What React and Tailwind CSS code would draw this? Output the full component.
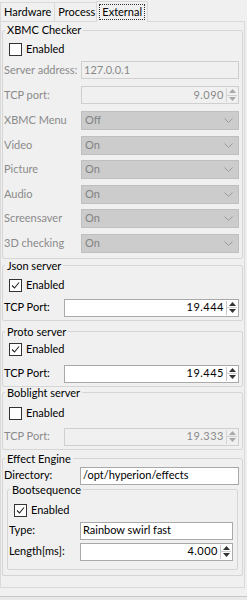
import React from 'react';

const font = { fontFamily: 'Lato, "Liberation Sans", sans-serif' };

function GroupBox({ title, className = '', children }) {
  return (
    <fieldset className={`border border-[#d5d5d5] rounded-[2px] px-[1px] m-0 ${className}`}>
      <legend className="px-[2px] ml-[1px] text-[11px] leading-[12px] text-black">{title}</legend>
      {children}
    </fieldset>
  );
}

function CheckBox({ checked, className = '' }) {
  return (
    <div className={`flex items-center h-[14px] gap-[4px] pl-[5px] ${className}`}>
      <span className="w-[13px] h-[13px] border border-[#333] bg-white flex items-center justify-center">
        {checked && (
          <svg width="11" height="11" viewBox="0 0 11 11">
            <path d="M2 5.5 L4.5 8 L9 2.5" fill="none" stroke="#222" strokeWidth="1.1" />
          </svg>
        )}
      </span>
      <span className="text-[11px] text-black">Enabled</span>
    </div>
  );
}

function Arrows({ disabled }) {
  const c = disabled ? '#a8a8a8' : '#333';
  return (
    <div className={`w-[11px] h-full flex flex-col border-l ${disabled ? 'border-[#d5d5d5]' : 'border-[#c8c8c8]'}`}>
      <div className="flex-1 flex items-center justify-center border-b border-[#d0d0d0]">
        <svg width="7" height="4" viewBox="0 0 7 4"><path d="M0 4 L3.5 0 L7 4Z" fill={c} /></svg>
      </div>
      <div className="flex-1 flex items-center justify-center">
        <svg width="7" height="4" viewBox="0 0 7 4"><path d="M0 0 L3.5 4 L7 0Z" fill={c} /></svg>
      </div>
    </div>
  );
}

function LineEdit({ value, disabled, className = '' }) {
  return (
    <div
      className={`h-[18px] border flex items-center px-[2px] text-[11px] ${
        disabled ? 'bg-[#f0f0f0] border-[#cfcfcf] text-[#8a8a8a]' : 'bg-white border-[#a9a9a9] text-black'
      } ${className}`}
    >
      {value}
    </div>
  );
}

function SpinBox({ value, disabled, className = '' }) {
  return (
    <div
      className={`h-[18px] border flex items-stretch text-[11px] ${
        disabled ? 'bg-[#f0f0f0] border-[#cfcfcf] text-[#8a8a8a]' : 'bg-white border-[#a9a9a9] text-black'
      } ${className}`}
    >
      <div className="flex-1 flex items-center justify-end pr-[2px] tracking-[0.5px]">{value}</div>
      <div className="py-[1px] pr-[1px]">
        <Arrows disabled={disabled} />
      </div>
    </div>
  );
}

function Combo({ value }) {
  return (
    <div className="h-[19px] flex-1 bg-[#cccccc] border border-[#bfbfbf] flex items-center justify-between px-[3px] text-[11px] text-[#838383]">
      <span>{value}</span>
      <svg width="9" height="5" viewBox="0 0 9 5" className="mr-[2px]">
        <path d="M0.5 0.5 L4.5 4.5 L8.5 0.5" fill="none" stroke="#9a9a9a" />
      </svg>
    </div>
  );
}

function Row({ label, disabled, labelWidth = 'w-[77px]', className = '', children }) {
  return (
    <div className={`flex items-center ${className}`}>
      <span className={`${labelWidth} shrink-0 text-[11px] whitespace-nowrap ${disabled ? 'text-[#8a8a8a]' : 'text-black'}`}>{label}</span>
      {children}
    </div>
  );
}

export default function App() {
  const combos = [
    ['XBMC Menu', 'Off'],
    ['Video', 'On'],
    ['Picture', 'On'],
    ['Audio', 'On'],
    ['Screensaver', 'On'],
    ['3D checking', 'On'],
  ];

  return (
    <div className="w-[247px] h-[600px] bg-[#f0f0f0] overflow-hidden" style={font}>
      {/* tab bar */}
      <div className="flex items-end h-[21px] text-[11px] text-black">
        <div className="h-[19px] px-[3px] flex items-center border-t border-l border-[#d9d9d9]">Hardware</div>
        <div className="h-[19px] pl-[3px] pr-[1px] flex items-center border-t border-l border-[#d9d9d9]">Process</div>
        <div className="h-[21px] px-[2px] flex items-center border-t border-x border-[#d9d9d9] bg-[#f0f0f0] -mb-px relative">
          <span className="border border-dotted border-[#333] px-[2px] leading-[14px]">External</span>
        </div>
      </div>

      {/* tab pane */}
      <div className="w-[245px] h-[567px] border border-[#d9d9d9] px-[1px] pt-[2px] flex flex-col">
        <GroupBox title="XBMC Checker" className="pb-[5px]">
          <CheckBox className="mt-[6px]" />
          <div className="flex flex-col gap-[7px] mt-[5px] pr-[2px]">
            <Row label="Server address:" disabled>
              <LineEdit value="127.0.0.1" disabled className="flex-1" />
            </Row>
            <Row label="TCP port:" disabled>
              <SpinBox value="9.090" disabled className="flex-1" />
            </Row>
            <div className="flex flex-col gap-[5.5px]">
              {combos.map(([l, v]) => (
                <Row key={l} label={l} disabled>
                  <Combo value={v} />
                </Row>
              ))}
            </div>
          </div>
        </GroupBox>

        <GroupBox title="Json server" className="mt-[1px] pb-[3px]">
          <CheckBox checked className="mt-[7px]" />
          <Row label="TCP Port:" labelWidth="w-[60px]" className="mt-[6px] pr-[2px]">
            <SpinBox value="19.444" className="flex-1" />
          </Row>
        </GroupBox>

        <GroupBox title="Proto server" className="mt-[5px] pb-[3px]">
          <CheckBox checked className="mt-[5px]" />
          <Row label="TCP Port:" labelWidth="w-[60px]" className="mt-[8px] pr-[2px]">
            <SpinBox value="19.445" className="flex-1" />
          </Row>
        </GroupBox>

        <GroupBox title="Boblight server" className="mt-0 pb-[3px]">
          <CheckBox className="mt-[8px]" />
          <Row label="TCP Port:" disabled labelWidth="w-[60px]" className="mt-[7px] pr-[2px]">
            <SpinBox value="19.333" disabled className="flex-1" />
          </Row>
        </GroupBox>

        <GroupBox title="Effect Engine" className="mt-[3px] pb-[5px]">
          <Row label="Directory:" labelWidth="w-[76px]" className="mt-[2px] pr-[2px]">
            <LineEdit value="/opt/hyperion/effects" className="flex-1" />
          </Row>
          <GroupBox title="Bootsequence" className="mx-[3px] -mt-px pb-[8px]">
            <CheckBox checked className="mt-[8px] pl-[4px]" />
            <div className="flex flex-col gap-[3px] mt-[4px] pr-[3px]">
              <Row label="Type:" labelWidth="w-[71px]">
                <LineEdit value="Rainbow swirl fast" className="flex-1" />
              </Row>
              <Row label="Length[ms]:" labelWidth="w-[71px]">
                <SpinBox value="4.000" className="flex-1" />
              </Row>
            </div>
          </GroupBox>
        </GroupBox>
      </div>

      <div className="mt-[8px] h-[10px] border-t border-[#c8c8c8] bg-[#e9e9e9]" />
    </div>
  );
}
